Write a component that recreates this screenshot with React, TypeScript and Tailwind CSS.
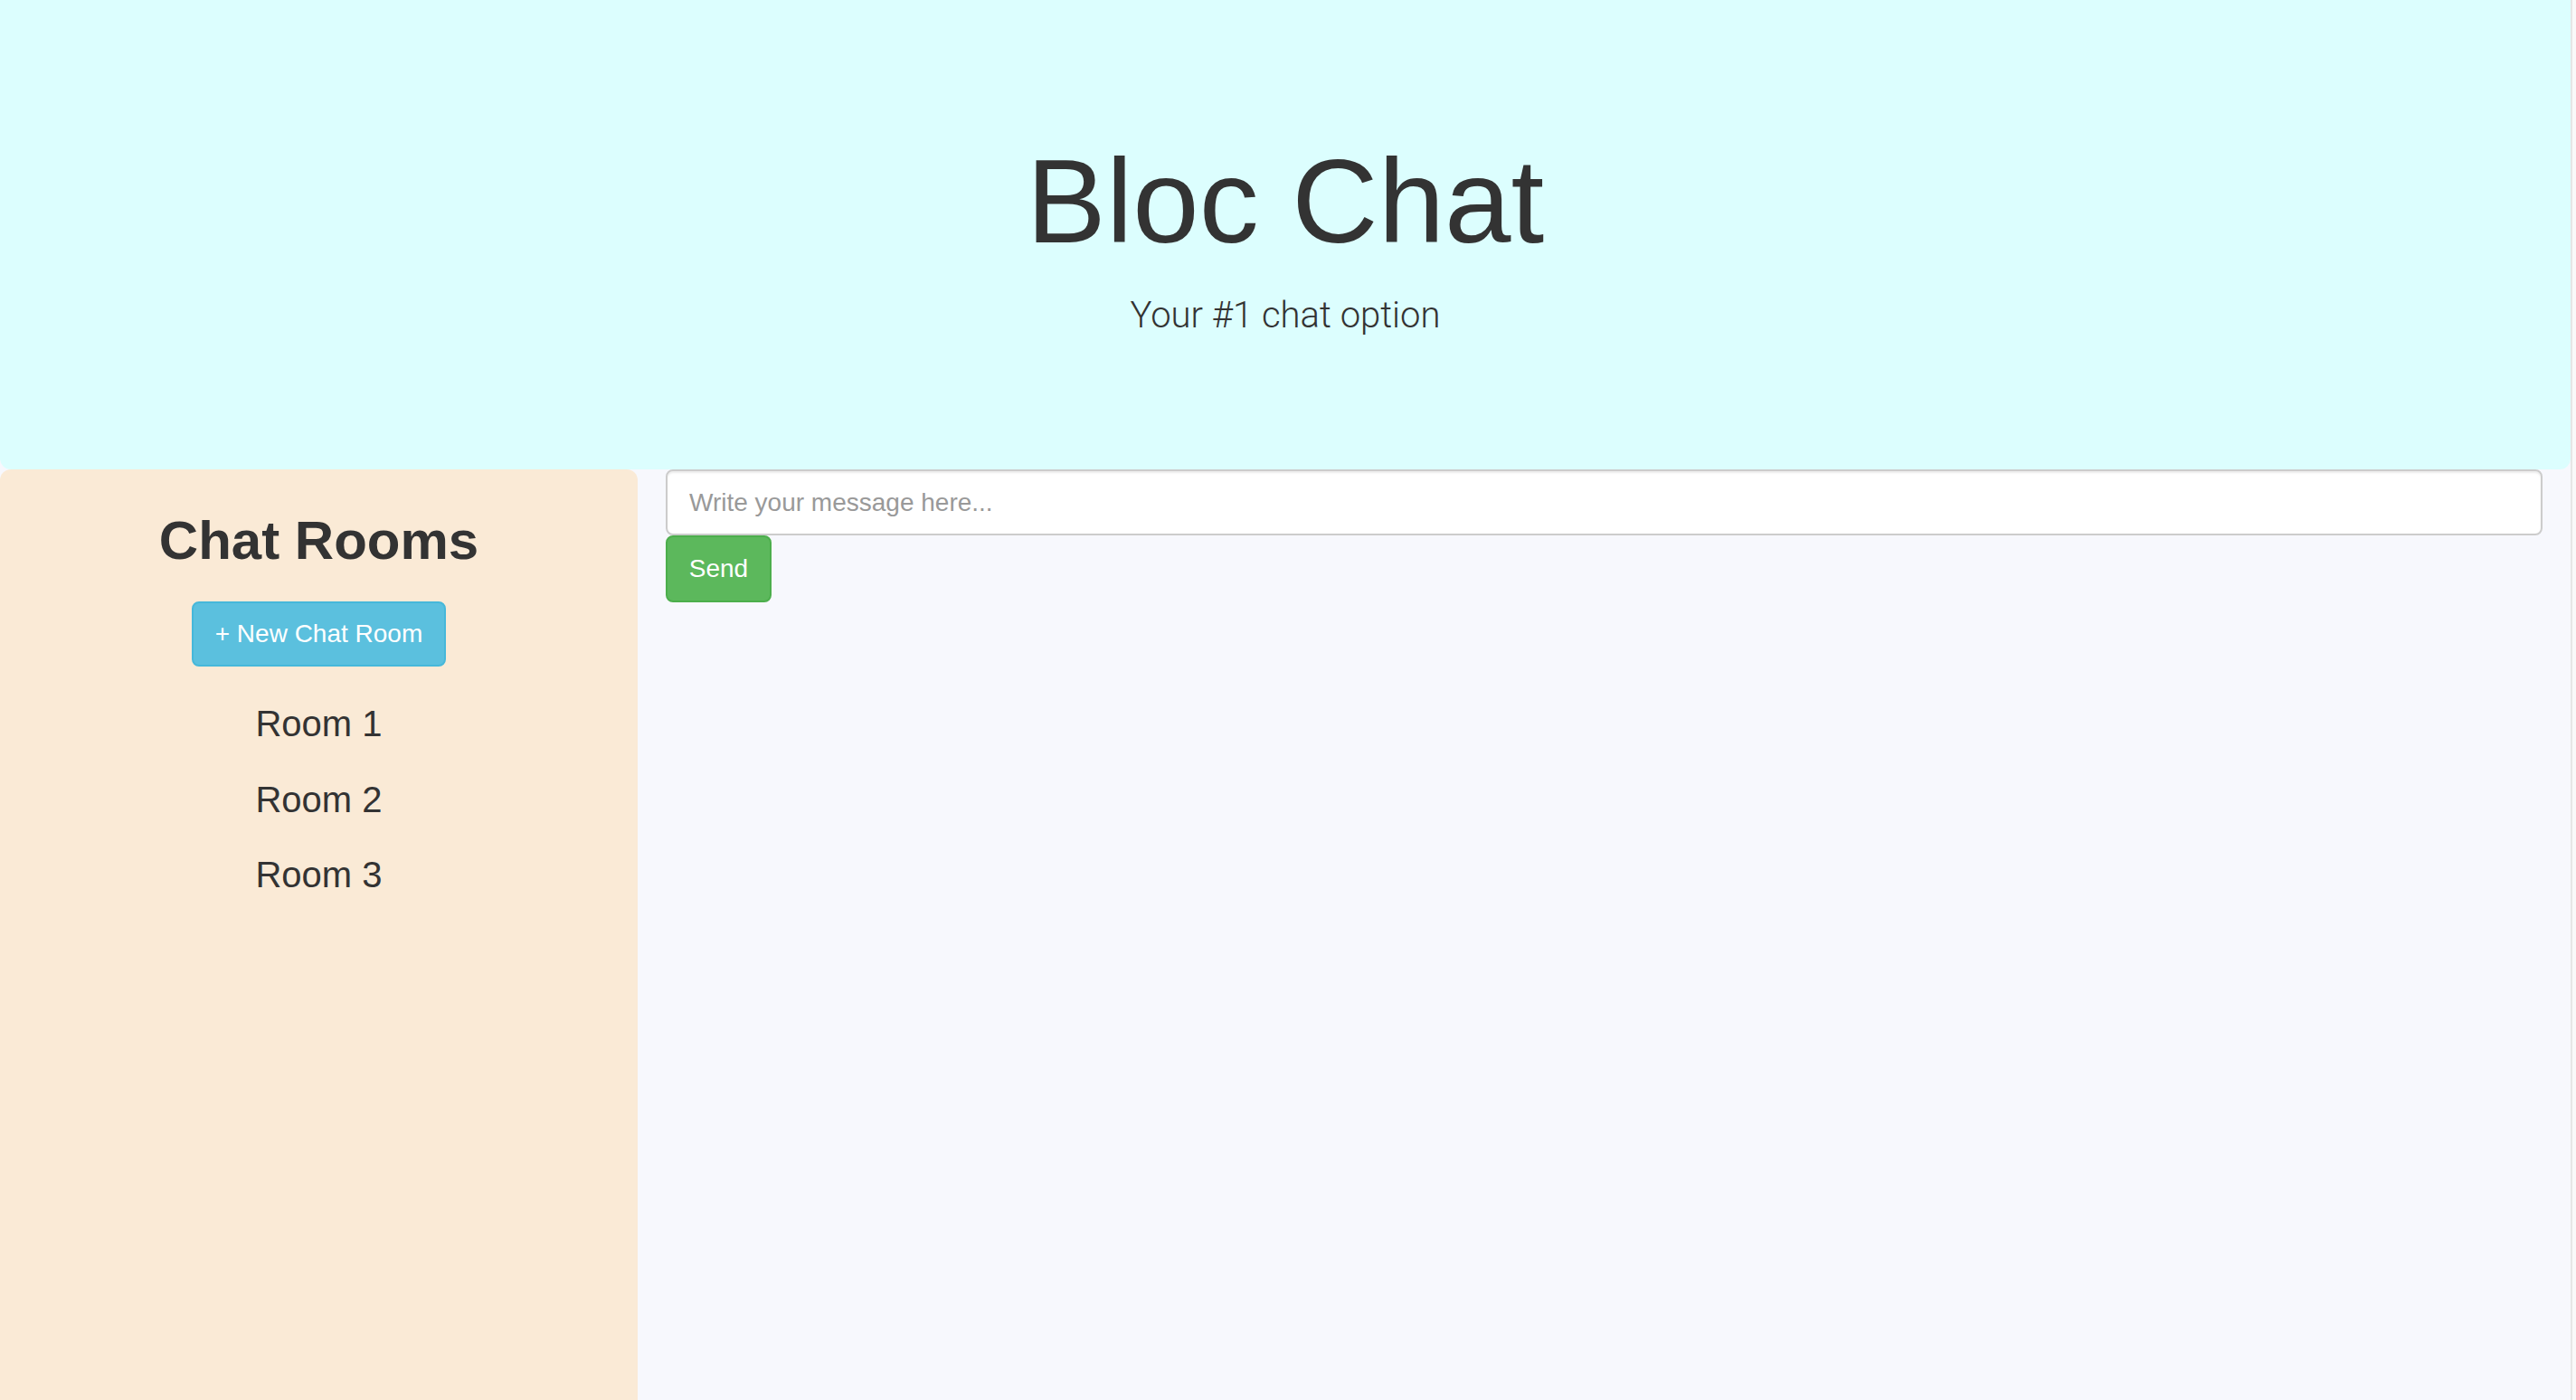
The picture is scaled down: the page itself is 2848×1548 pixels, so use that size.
import React from "react";

export default function App() {
  const sans = { fontFamily: '"Liberation Sans", Arial, Helvetica, sans-serif' };
  return (
    <div
      className="flex w-[2848px] h-[1548px] overflow-hidden bg-[#f7f8fd] text-[#333]"
      style={sans}
    >
      <div className="flex-1 flex flex-col min-w-0">
        <header className="h-[519px] shrink-0 bg-[#dcfefe] rounded-b-[12px] flex flex-col items-center">
          <h1 className="mt-[157px] text-[132px] leading-none font-normal text-[#333]">
            Bloc Chat
          </h1>
          <p
            className="mt-[40px] text-[40px] leading-none font-light text-[#333]"
            style={{ fontFamily: 'Roboto, "Liberation Sans", sans-serif' }}
          >
            Your #1 chat option
          </p>
        </header>
        <div className="flex flex-1 min-h-0">
          <aside className="w-[705px] shrink-0 bg-[#faead6] rounded-t-[12px] flex flex-col items-center">
            <h2 className="mt-[46px] text-[60px] leading-[66px] font-bold text-[#333]">
              Chat Rooms
            </h2>
            <button className="mt-[34px] h-[72px] px-[24px] rounded-[8px] bg-[#5bc0de] border-2 border-[#46b8da] text-white text-[28px] leading-[40px]">
              + New Chat Room
            </button>
            <ul className="mt-[22px] flex flex-col items-center">
              {["Room 1", "Room 2", "Room 3"].map((r) => (
                <li key={r} className="text-[40px] leading-[83.5px] text-[#333]">
                  {r}
                </li>
              ))}
            </ul>
          </aside>
          <main className="flex-1 min-w-0 px-[31px] flex flex-col items-start">
            <input
              type="text"
              placeholder="Write your message here..."
              className="w-full h-[73px] rounded-[8px] border-2 border-[#cccccc] bg-white px-[24px] text-[28px] text-[#555] placeholder:text-[#999] shadow-[inset_0_2px_2px_rgba(0,0,0,0.075)] outline-none"
            />
            <button className="h-[74px] w-[117px] rounded-[8px] bg-[#5cb85c] border-2 border-[#4cae4c] text-white text-[28px] leading-[40px]">
              Send
            </button>
          </main>
        </div>
      </div>
      <div className="w-[6px] flex shrink-0">
        <div className="w-[2px] bg-[#e6e6e6]" />
        <div className="flex-1 bg-[#f9f9f9]" />
      </div>
    </div>
  );
}
